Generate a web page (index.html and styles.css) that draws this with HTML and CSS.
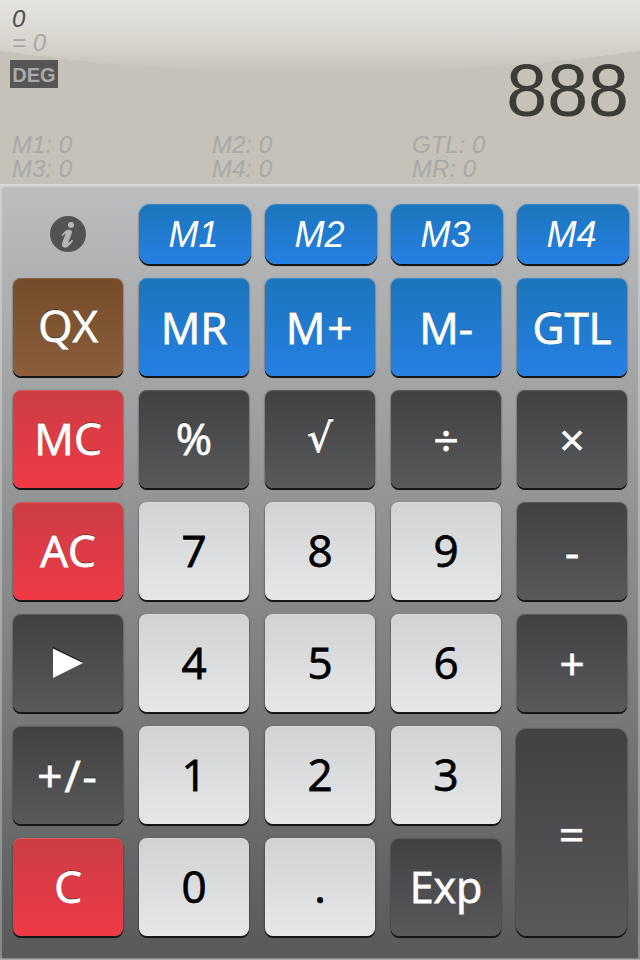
FILE: index.html
```
<!DOCTYPE html>
<html lang="en">
<head>
    <meta charset="UTF-8">
    <meta name="viewport" content="width=device-width, initial-scale=1.0">
    <title>Calculator</title>
    <link rel="stylesheet" href="styles.css">
</head>
<body>
    <div class="calculator">
        <div class="display">
            <p class="expression">0</p>
            <p class="preview">= 0</p>
            <div class="result-row">
                <span class="mode">DEG</span>
                <span class="result">888</span>
            </div>
            <div class="memory">
                <span>M1: 0</span>
                <span>M2: 0</span>
                <span>GTL: 0</span>
                <span>M3: 0</span>
                <span>M4: 0</span>
                <span>MR: 0</span>
            </div>
        </div>

        <div class="keypad">
            <div class="keys top-keys">
                <div class="info">
                    <svg width="36" height="36" viewBox="0 0 36 36">
                        <circle cx="18" cy="18" r="18" fill="#515254"/>
                        <circle cx="21" cy="9" r="3" fill="#b4b5b7"/>
                        <path d="M12 19C14.500 15.500 17 14 19.200 14c2.300 0 2.800 1.500 2 3.700L18 26c-.5 1.500.5 1.700 4-1.800l.6.7c-3 4-5.200 6.300-7.600 6.300-2.500 0-3.200-1.800-2.200-4.900l3.200-8.300c.5-1.500-.5-1.400-3.300 1.600z" fill="#b4b5b7" stroke="#b4b5b7" stroke-width=".9"/>
                    </svg>
                </div>
                <button class="key blue small">M1</button>
                <button class="key blue small">M2</button>
                <button class="key blue small">M3</button>
                <button class="key blue small">M4</button>
            </div>

            <div class="keys">
                <button class="key brown qx">QX</button>
                <button class="key blue low">MR</button>
                <button class="key blue low spaced">M+</button>
                <button class="key blue low">M-</button>
                <button class="key blue low">GTL</button>

                <button class="key red">MC</button>
                <button class="key dark">%</button>
                <button class="key dark root">√</button>
                <button class="key dark operator">÷</button>
                <button class="key dark operator">×</button>

                <button class="key red">AC</button>
                <button class="key light">7</button>
                <button class="key light">8</button>
                <button class="key light">9</button>
                <button class="key dark operator">-</button>

                <button class="key dark">
                    <svg class="play" width="30" height="32" viewBox="0 0 30 32">
                        <path d="M0 0L30 15L0 30z" fill="#141414"/>
                        <path d="M0 1.500L30 16L0 31z" fill="#fff"/>
                    </svg>
                </button>
                <button class="key light">4</button>
                <button class="key light">5</button>
                <button class="key light">6</button>
                <button class="key dark operator">+</button>

                <button class="key dark operator spaced">+/-</button>
                <button class="key light">1</button>
                <button class="key light">2</button>
                <button class="key light">3</button>
                <button class="key dark equals">=</button>

                <button class="key red">C</button>
                <button class="key light">0</button>
                <button class="key light">.</button>
                <button class="key dark exp">Exp</button>
            </div>
        </div>
    </div>
</body>
</html>
```
FILE: styles.css
```
* {
    box-sizing: border-box;
}

body {
    margin: 0;
    font-family: "Liberation Sans", Arial, sans-serif;
    background: #c6c1b9;
}

.calculator {
    width: 640px;
    height: 960px;
}

/* display */
.display {
    height: 184px;
    padding: 7px 12px 0;
    font-size: 24px;
    line-height: 24px;
    font-style: italic;
    color: #a9a9a9;
    background: radial-gradient(ellipse 853px 300px at 320px -227px, transparent 99.900%, #c6c1b9 100%),
        linear-gradient(#e4e4df 0, #d8d5ce 42px, #c7c2ba 72px, #c6c1b9 73px);
}

.display p {
    margin: 0;
}

.display .expression {
    color: #4f4f4f;
}

.result-row {
    display: flex;
    justify-content: space-between;
    height: 78px;
    padding-top: 5px;
    font-style: normal;
}

.mode {
    width: 48px;
    height: 28px;
    margin-left: -2px;
    background: #555;
    color: #aaa;
    font-size: 20px;
    font-weight: bold;
    line-height: 30px;
    text-align: center;
}

.result {
    margin-right: -1px;
    font-size: 73.500px;
    line-height: 61px;
    color: #3c3b37;
}

.memory {
    display: grid;
    grid-template-columns: 200px 200px 1fr;
}

/* keypad */
.keypad {
    height: 776px;
    padding: 19px 13px 0;
    border: 1px solid #aaabad;
    border-top-color: #dcddde;
    border-width: 1px 0;
    background: linear-gradient(#bcbdbf, #58595b);
    box-shadow: inset 2px 2px 1px rgba(255, 255, 255, 0.3), inset -2px -1px 1px rgba(255, 255, 255, 0.3);
}

.keys {
    display: grid;
    grid-template-columns: repeat(5, 110px);
    grid-auto-rows: 98px;
    gap: 14px 16px;
}

.top-keys {
    grid-auto-rows: 60px;
    margin-bottom: 14px;
}

.info {
    padding: 12px 0 0 37px;
}

.info svg {
    display: block;
}

.key {
    display: flex;
    align-items: center;
    justify-content: center;
    border: none;
    border-radius: 8px;
    padding: 0 0 3px;
    font-family: "Open Sans", "Noto Sans", sans-serif;
    font-size: 44px;
    line-height: 60px;
    color: #fff;
    -webkit-text-stroke: 0.8px currentColor;
    text-shadow: 0 -1px 0 #111;
    box-shadow: inset 0 1px 0 rgba(255, 255, 255, 0.15), 0 2px 0 #151617, 0 1px 2px rgba(0, 0, 0, 0.7);
}

.key.low {
    padding: 0;
}

.key.qx {
    padding-bottom: 4px;
}

.key.operator {
    padding-bottom: 1px;
}

.key.spaced {
    letter-spacing: 2px;
}

.key.root {
    padding-bottom: 3px;
    font-family: "DejaVu Sans", sans-serif;
    font-size: 40px;
}

.key.exp {
    font-size: 43px;
    padding-bottom: 1px;
}

.key.small {
    width: 112px;
    border-radius: 11px;
    padding: 1px 3px 0 0;
    font-family: "Liberation Sans", Arial, sans-serif;
    font-size: 36px;
    font-style: italic;
    -webkit-text-stroke: 0;
    text-shadow: none;
}

.play {
    margin-top: 3px;
}

.blue {
    background: linear-gradient(#1b75bb, #2680e3);
}

.brown {
    background: linear-gradient(#754c29, #8b5e3c);
}

.red {
    background: linear-gradient(#cc3d43, #ef3a46);
}

.dark {
    background: linear-gradient(#414142, #58595b);
}

.light {
    background: linear-gradient(#d1d2d4, #e6e7e8);
    color: #000;
    text-shadow: 0 1px 0 #fff;
}

.key.equals {
    grid-row: span 2;
    width: 111px;
    margin: 2px 0 0 -1px;
    border-radius: 11px;
    padding: 3px 0 0;
}
```
